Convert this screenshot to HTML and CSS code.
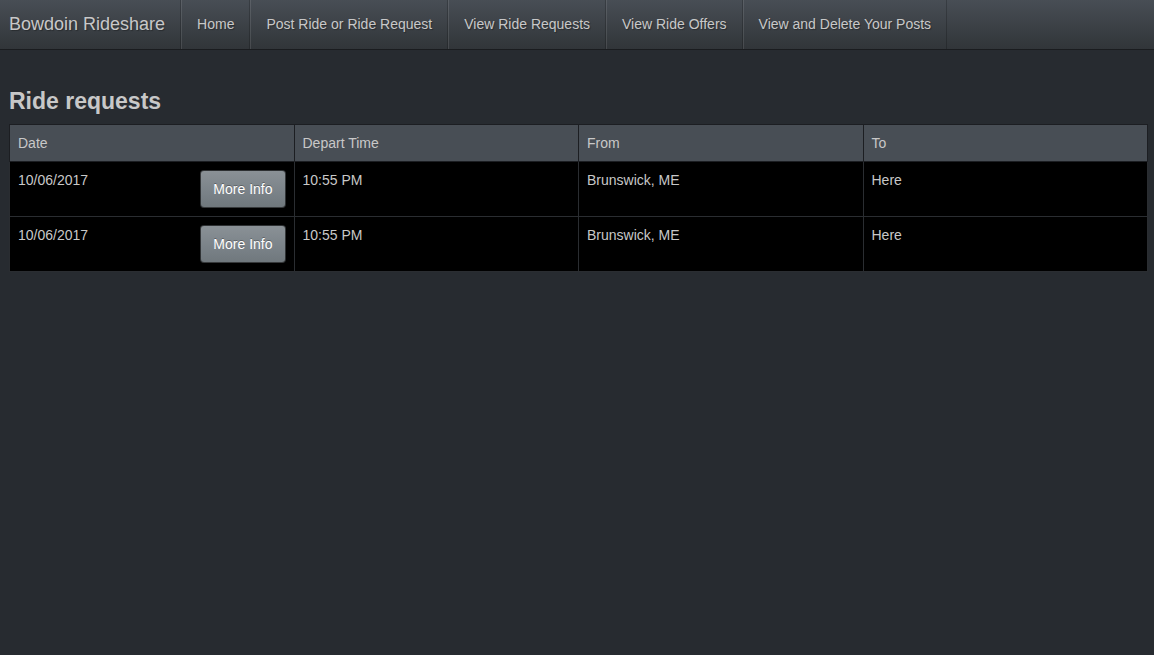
FILE: index.html
```html
<!DOCTYPE html>
<html lang="en">
<head>
    <meta charset="UTF-8">
    <meta name="viewport" content="width=device-width, initial-scale=1.0">
    <title>Bowdoin Rideshare - Ride Requests</title>
    <link rel="stylesheet" href="styles.css">
</head>
<body>
    <nav class="navbar">
        <a class="brand" href="#">Bowdoin Rideshare</a>
        <ul class="nav">
            <li><a href="#">Home</a></li>
            <li><a href="#">Post Ride or Ride Request</a></li>
            <li><a href="#">View Ride Requests</a></li>
            <li><a href="#">View Ride Offers</a></li>
            <li><a href="#">View and Delete Your Posts</a></li>
        </ul>
    </nav>

    <div class="main">
        <h3>Ride requests</h3>
        <table class="rides">
            <thead>
                <tr>
                    <th>Date</th>
                    <th>Depart Time</th>
                    <th>From</th>
                    <th>To</th>
                </tr>
            </thead>
            <tbody>
                <tr>
                    <td>10/06/2017 <button class="btn">More Info</button></td>
                    <td>10:55 PM</td>
                    <td>Brunswick, ME</td>
                    <td>Here</td>
                </tr>
                <tr>
                    <td>10/06/2017 <button class="btn">More Info</button></td>
                    <td>10:55 PM</td>
                    <td>Brunswick, ME</td>
                    <td>Here</td>
                </tr>
            </tbody>
        </table>
    </div>
</body>
</html>
```

FILE: styles.css
```css
body {
    margin: 0;
    background: #272b30;
    color: #c8c8c8;
    font-family: "Liberation Sans", Arial, sans-serif;
    font-size: 14px;
    line-height: 20px;
}
a {
    color: #c8c8c8;
    text-decoration: none;
}
.navbar {
    display: flex;
    align-items: stretch;
    height: 49px;
    background: linear-gradient(#484e55, #3a3f44 60%, #313539);
    border-bottom: 1px solid #1a1c1f;
}
.brand {
    display: flex;
    align-items: center;
    padding: 0 15px 2px 9px;
    font-size: 18px;
    text-shadow: 1px 1px 1px rgba(0,0,0,0.3);
}
.nav {
    display: flex;
    margin: 0;
    padding: 0;
    list-style: none;
    border-left: 1px solid rgba(0,0,0,0.2);
}
.nav li {
    display: flex;
    border-left: 1px solid rgba(255,255,255,0.1);
    border-right: 1px solid rgba(0,0,0,0.2);
}
.nav a {
    display: flex;
    align-items: center;
    padding: 0 15px 2px;
    text-shadow: 1px 1px 1px rgba(0,0,0,0.3);
}
.main {
    margin: 0 6px 0 9px;
}
h3 {
    margin: 39px 0 10px;
    font-size: 23px;
    line-height: 25px;
    font-weight: bold;
    color: #c8c8c8;
}
.rides {
    width: 100%;
    table-layout: fixed;
    border-collapse: collapse;
    border: 1px solid #1c1e22;
}
.rides th {
    padding: 8px;
    text-align: left;
    font-weight: normal;
    background: #484e55;
    border: 1px solid #1c1e22;
}
.rides td {
    padding: 8px;
    vertical-align: top;
    background: #000;
    border: 1px solid #2a2d31;
    color: #c8c8c8;
}
.btn {
    float: right;
    padding: 8px 12px;
    font-family: "Liberation Sans", Arial, sans-serif;
    font-size: 14px;
    line-height: 20px;
    color: #fff;
    text-shadow: 0 -1px 0 rgba(0,0,0,0.3);
    background: linear-gradient(#8a9196, #7a8288 60%, #70787d);
    border: 1px solid rgba(0,0,0,0.6);
    border-radius: 4px;
    cursor: pointer;
}
```
